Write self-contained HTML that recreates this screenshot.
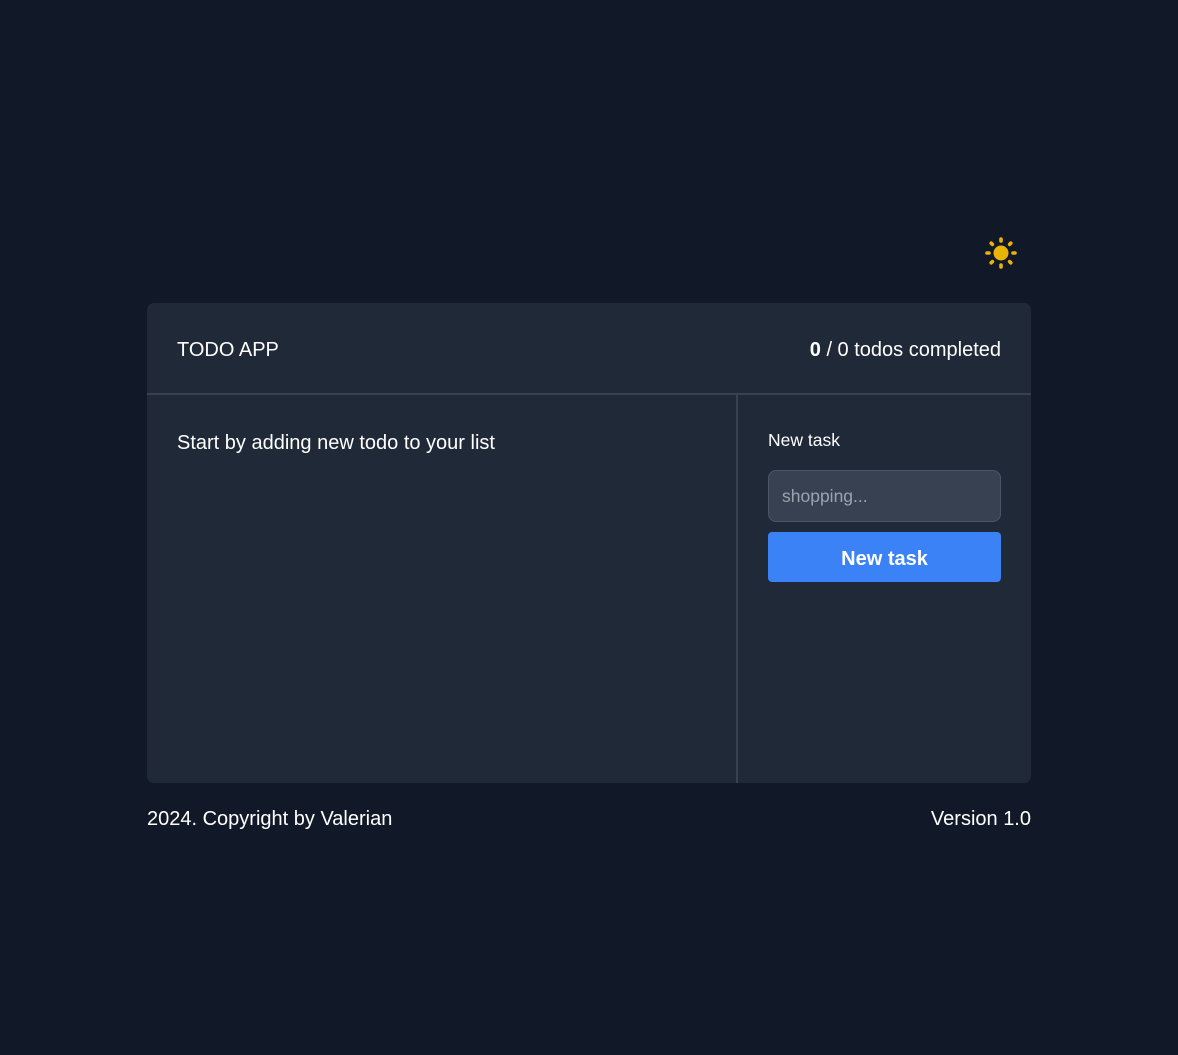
<!DOCTYPE html>
<html><head><meta charset="utf-8"><style>
*{box-sizing:border-box;margin:0;padding:0}
body{width:1178px;height:1055px;background:#111827;font-family:"Liberation Sans",sans-serif;color:#fff;position:relative;overflow:hidden}
.sun{position:absolute;left:984px;top:236px}
.card{position:absolute;left:147px;top:303px;width:884px;height:480px;background:#1f2937;border-radius:7px;overflow:hidden}
.head{height:92px;border-bottom:2px solid #374151;display:flex;justify-content:space-between;align-items:center;padding:4px 30px 0;font-size:20px}
.left{position:absolute;left:0;top:92px;width:591px;bottom:0;border-right:2px solid #374151;padding:37px 30px;font-size:20px}
.right{position:absolute;left:591px;top:92px;right:0;bottom:0}
.lbl{position:absolute;left:30px;top:35px;font-size:17.5px}
.inp{position:absolute;left:30px;top:75px;width:233px;height:52px;background:#374151;border:1px solid #4b5563;border-radius:8px;color:#9ca3af;font-size:17.5px;padding:15px 13px}
.btn{position:absolute;left:30px;top:137px;width:233px;height:50px;background:#3b82f6;border-radius:4px;font-weight:bold;font-size:20px;text-align:center;line-height:54px}
.foot{position:absolute;top:808px;left:147px;width:884px;display:flex;justify-content:space-between;font-size:20px}
</style></head><body>
<svg class="sun" width="34" height="34" viewBox="0 0 34 34">
<circle cx="17" cy="17" r="7.5" fill="#eab308"/>
<g stroke="#eab308" stroke-width="3.6" stroke-linecap="round">
<line x1="17" y1="3" x2="17" y2="5"/><line x1="17" y1="29" x2="17" y2="31"/>
<line x1="3" y1="17" x2="5" y2="17"/><line x1="29" y1="17" x2="31" y2="17"/>
<line x1="7.2" y1="7.2" x2="8.4" y2="8.4"/><line x1="25.6" y1="25.6" x2="26.8" y2="26.8"/>
<line x1="26.8" y1="7.2" x2="25.6" y2="8.4"/><line x1="7.2" y1="26.8" x2="8.4" y2="25.6"/>
</g></svg>
<div class="card">
<div class="head"><span>TODO APP</span><span><b>0</b> / 0 todos completed</span></div>
<div class="left">Start by adding new todo to your list</div>
<div class="right"><div class="lbl">New task</div><div class="inp">shopping...</div><div class="btn">New task</div></div>
</div>
<div class="foot"><span>2024. Copyright by Valerian</span><span>Version 1.0</span></div>
</body></html>
